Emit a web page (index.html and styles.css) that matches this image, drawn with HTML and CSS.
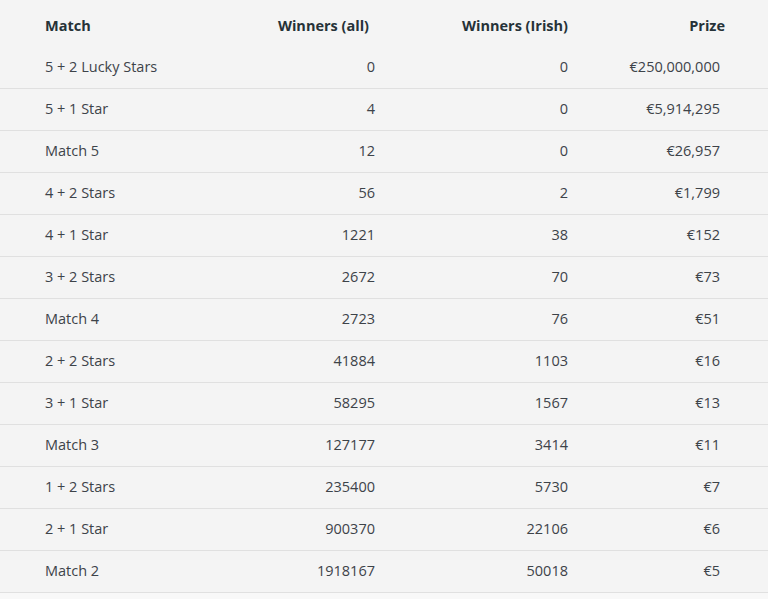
FILE: index.html
```html
<!DOCTYPE html>
<html>
<head>
<meta charset="utf-8">
<link rel="stylesheet" href="styles.css">
</head>
<body>
<div class="table">
  <div class="row head">
    <div class="c1">Match</div>
    <div class="c2">Winners (all)</div>
    <div class="c3">Winners (Irish)</div>
    <div class="c4">Prize</div>
  </div>
  <div class="row"><div class="c1">5 + 2 Lucky Stars</div><div class="c2">0</div><div class="c3">0</div><div class="c4">€250,000,000</div></div>
  <div class="row"><div class="c1">5 + 1 Star</div><div class="c2">4</div><div class="c3">0</div><div class="c4">€5,914,295</div></div>
  <div class="row"><div class="c1">Match 5</div><div class="c2">12</div><div class="c3">0</div><div class="c4">€26,957</div></div>
  <div class="row"><div class="c1">4 + 2 Stars</div><div class="c2">56</div><div class="c3">2</div><div class="c4">€1,799</div></div>
  <div class="row"><div class="c1">4 + 1 Star</div><div class="c2">1221</div><div class="c3">38</div><div class="c4">€152</div></div>
  <div class="row"><div class="c1">3 + 2 Stars</div><div class="c2">2672</div><div class="c3">70</div><div class="c4">€73</div></div>
  <div class="row"><div class="c1">Match 4</div><div class="c2">2723</div><div class="c3">76</div><div class="c4">€51</div></div>
  <div class="row"><div class="c1">2 + 2 Stars</div><div class="c2">41884</div><div class="c3">1103</div><div class="c4">€16</div></div>
  <div class="row"><div class="c1">3 + 1 Star</div><div class="c2">58295</div><div class="c3">1567</div><div class="c4">€13</div></div>
  <div class="row"><div class="c1">Match 3</div><div class="c2">127177</div><div class="c3">3414</div><div class="c4">€11</div></div>
  <div class="row"><div class="c1">1 + 2 Stars</div><div class="c2">235400</div><div class="c3">5730</div><div class="c4">€7</div></div>
  <div class="row"><div class="c1">2 + 1 Star</div><div class="c2">900370</div><div class="c3">22106</div><div class="c4">€6</div></div>
  <div class="row"><div class="c1">Match 2</div><div class="c2">1918167</div><div class="c3">50018</div><div class="c4">€5</div></div>
</div>
</body>
</html>
```
FILE: styles.css
```css
html, body {
  margin: 0;
  padding: 0;
  background: #f8f8f8;
}
body {
  font-family: "Open Sans", "Liberation Sans", sans-serif;
  font-size: 14.5px;
  color: #3d4349;
}
.table {
  background: #f4f4f4;
}
.row {
  display: grid;
  grid-template-columns: 45px 200px 130px 193px 152px 48px;
  align-items: center;
  height: 39px;
  padding-bottom: 2px;
  border-bottom: 1px solid #e0e0e0;
}
.row > div:first-child { grid-column: 2; }
.c1 { text-align: left; }
.c2, .c3, .c4 { text-align: right; }
.head {
  height: 47px;
  padding-top: 3px;
  padding-bottom: 0;
  box-sizing: border-box;
  border-bottom: none;
  font-weight: 700;
  color: #263238;
}
.head .c2 { padding-right: 6px; }
.head .c4 { margin-right: -5px; }
```
